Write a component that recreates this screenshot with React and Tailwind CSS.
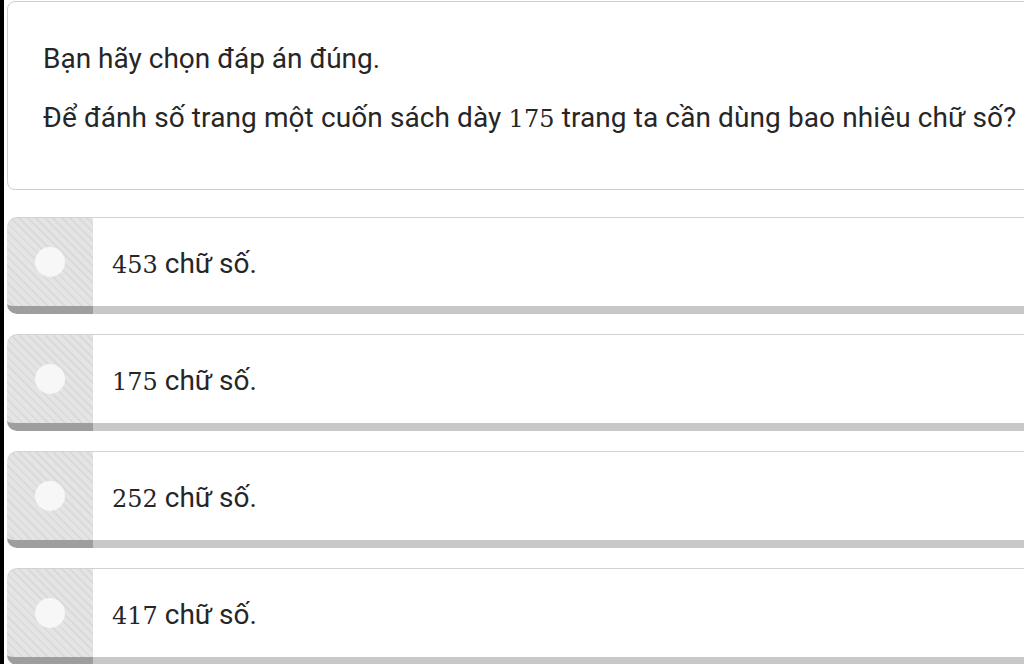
import React from "react";

const options = ["453", "175", "252", "417"];

function Option({ num }) {
  return (
    <div className="flex h-[97px] w-[1030px] shrink-0">
      <div className="flex w-[86px] shrink-0 items-center justify-center rounded-tl-[10px] rounded-bl-[10px] border-t border-b-[8px] border-t-[#d2d2d2] border-b-[#9e9e9e] bg-[repeating-linear-gradient(45deg,#e4e4e4_0px,#e4e4e4_4px,#dadada_4px,#dadada_6px)]">
        <div className="h-[30px] w-[30px] rounded-full bg-[#f7f7f7]" />
      </div>
      <div className="flex flex-1 items-center border-t border-b-[8px] border-t-[#d2d2d2] border-b-[#c8c8c8] bg-white pl-[19px] pt-[3px]">
        <span className="text-[28px] text-[#262626]" style={{ fontFamily: "Roboto, sans-serif" }}>
          <span className="text-[24px]" style={{ fontFamily: "'DejaVu Serif', serif" }}>{num}</span> chữ số.
        </span>
      </div>
    </div>
  );
}

export default function App() {
  return (
    <div className="h-[664px] w-[1024px] overflow-hidden border-l-4 border-black bg-white pl-[3px]" style={{ fontFamily: "Roboto, sans-serif" }}>
      <div className="mt-[1px] w-[1040px] rounded-[8px] border-[1.5px] border-[#cfcfcf] bg-white pb-[50px] pl-[35px] pt-[37px] text-[28px] leading-[40px] text-[#262626]">
        <div>Bạn hãy chọn đáp án đúng.</div>
        <div className="mt-[19px] whitespace-nowrap tracking-[0.1px]">
          Để đánh số trang một cuốn sách dày{" "}
          <span className="text-[24px]" style={{ fontFamily: "'DejaVu Serif', serif" }}>175</span>{" "}
          trang ta cần dùng bao nhiêu chữ số?
        </div>
      </div>
      <div className="mt-[27px] flex flex-col gap-[20px]">
        {options.map((n) => (
          <Option key={n} num={n} />
        ))}
      </div>
    </div>
  );
}
